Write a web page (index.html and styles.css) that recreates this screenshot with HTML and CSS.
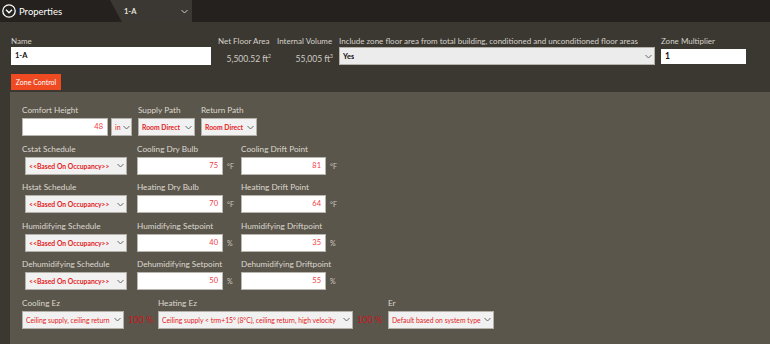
FILE: index.html
```html
<!DOCTYPE html>
<html lang="en">
<head>
    <meta charset="UTF-8">
    <title>Properties</title>
    <link rel="stylesheet" href="styles.css">
</head>
<body>
    <div class="topbar">
        <div class="title">
            <svg class="title-icon" width="14" height="14" viewBox="0 0 14 14">
                <circle cx="7" cy="7" r="6.2" fill="none" stroke="#fff" stroke-width="1.3"/>
                <polyline points="4,5.8 7,8.8 10,5.8" fill="none" stroke="#fff" stroke-width="1.4"/>
            </svg>
            <span>Properties</span>
        </div>
        <div class="tab">
            <span>1-A</span>
            <svg width="7" height="5" viewBox="0 0 7 5"><polyline points="0.5,1 3.5,4 6.5,1" fill="none" stroke="#cfcac2" stroke-width="1"/></svg>
        </div>
    </div>

    <div class="main">
        <div class="general">
            <div class="gfield name-field">
                <label>Name</label>
                <div class="text-box bold">1-A</div>
            </div>
            <div class="gfield area-field">
                <label>Net Floor Area</label>
                <div class="readout">5,500.52 ft<sup>2</sup></div>
            </div>
            <div class="gfield volume-field">
                <label>Internal Volume</label>
                <div class="readout">55,005 ft<sup>3</sup></div>
            </div>
            <div class="gfield include-field">
                <label>Include zone floor area from total building, conditioned and unconditioned floor areas</label>
                <div class="drop light">
                    <span class="bold">Yes</span>
                    <svg width="7" height="5" viewBox="0 0 7 5"><polyline points="0.5,1 3.5,4 6.5,1" fill="none" stroke="#666" stroke-width="1"/></svg>
                </div>
            </div>
            <div class="gfield mult-field">
                <label>Zone Multiplier</label>
                <div class="text-box bold small-box">1</div>
            </div>
        </div>

        <button class="zone-btn" type="button">Zone Control</button>

        <div class="panel">
            <div class="row">
                <div class="pfield comfort">
                    <label>Comfort Height</label>
                    <div class="ctl">
                        <div class="num w86">48</div>
                        <div class="drop unit-drop"><span>in</span><svg width="7" height="5" viewBox="0 0 7 5"><polyline points="0.5,1 3.5,4 6.5,1" fill="none" stroke="#666" stroke-width="1"/></svg></div>
                    </div>
                </div>
                <div class="pfield supply">
                    <label>Supply Path</label>
                    <div class="drop w57 bold"><span>Room Direct</span><svg width="7" height="5" viewBox="0 0 7 5"><polyline points="0.5,1 3.5,4 6.5,1" fill="none" stroke="#666" stroke-width="1"/></svg></div>
                </div>
                <div class="pfield">
                    <label>Return Path</label>
                    <div class="drop w56 bold"><span>Room Direct</span><svg width="7" height="5" viewBox="0 0 7 5"><polyline points="0.5,1 3.5,4 6.5,1" fill="none" stroke="#666" stroke-width="1"/></svg></div>
                </div>
            </div>

            <div class="row">
                <div class="pfield col1">
                    <label>Cstat Schedule</label>
                    <div class="drop sched bold"><span>&lt;&lt;Based On Occupancy&gt;&gt;</span><svg width="7" height="5" viewBox="0 0 7 5"><polyline points="0.5,1 3.5,4 6.5,1" fill="none" stroke="#666" stroke-width="1"/></svg></div>
                </div>
                <div class="pfield col2">
                    <label>Cooling Dry Bulb</label>
                    <div class="ctl"><div class="num w86">75</div><span class="unit">°F</span></div>
                </div>
                <div class="pfield">
                    <label>Cooling Drift Point</label>
                    <div class="ctl"><div class="num w85">81</div><span class="unit">°F</span></div>
                </div>
            </div>

            <div class="row">
                <div class="pfield col1">
                    <label>Hstat Schedule</label>
                    <div class="drop sched bold"><span>&lt;&lt;Based On Occupancy&gt;&gt;</span><svg width="7" height="5" viewBox="0 0 7 5"><polyline points="0.5,1 3.5,4 6.5,1" fill="none" stroke="#666" stroke-width="1"/></svg></div>
                </div>
                <div class="pfield col2">
                    <label>Heating Dry Bulb</label>
                    <div class="ctl"><div class="num w86">70</div><span class="unit">°F</span></div>
                </div>
                <div class="pfield">
                    <label>Heating Drift Point</label>
                    <div class="ctl"><div class="num w85">64</div><span class="unit">°F</span></div>
                </div>
            </div>

            <div class="row">
                <div class="pfield col1">
                    <label>Humidifying Schedule</label>
                    <div class="drop sched bold"><span>&lt;&lt;Based On Occupancy&gt;&gt;</span><svg width="7" height="5" viewBox="0 0 7 5"><polyline points="0.5,1 3.5,4 6.5,1" fill="none" stroke="#666" stroke-width="1"/></svg></div>
                </div>
                <div class="pfield col2">
                    <label>Humidifying Setpoint</label>
                    <div class="ctl"><div class="num w86">40</div><span class="unit">%</span></div>
                </div>
                <div class="pfield">
                    <label>Humidifying Driftpoint</label>
                    <div class="ctl"><div class="num w85">35</div><span class="unit">%</span></div>
                </div>
            </div>

            <div class="row">
                <div class="pfield col1">
                    <label>Dehumidifying Schedule</label>
                    <div class="drop sched bold"><span>&lt;&lt;Based On Occupancy&gt;&gt;</span><svg width="7" height="5" viewBox="0 0 7 5"><polyline points="0.5,1 3.5,4 6.5,1" fill="none" stroke="#666" stroke-width="1"/></svg></div>
                </div>
                <div class="pfield col2">
                    <label>Dehumidifying Setpoint</label>
                    <div class="ctl"><div class="num w86">50</div><span class="unit">%</span></div>
                </div>
                <div class="pfield">
                    <label>Dehumidifying Driftpoint</label>
                    <div class="ctl"><div class="num w85">55</div><span class="unit">%</span></div>
                </div>
            </div>

            <div class="row">
                <div class="pfield ez1">
                    <label>Cooling Ez</label>
                    <div class="ctl">
                        <div class="drop w102"><span>Ceiling supply, ceiling return</span><svg width="7" height="5" viewBox="0 0 7 5"><polyline points="0.5,1 3.5,4 6.5,1" fill="none" stroke="#666" stroke-width="1"/></svg></div>
                        <span class="pct">100 %</span>
                    </div>
                </div>
                <div class="pfield ez2">
                    <label>Heating Ez</label>
                    <div class="ctl">
                        <div class="drop w195"><span>Ceiling supply &lt; trm+15° (8°C), ceiling return, high velocity</span><svg width="7" height="5" viewBox="0 0 7 5"><polyline points="0.5,1 3.5,4 6.5,1" fill="none" stroke="#666" stroke-width="1"/></svg></div>
                        <span class="pct">100 %</span>
                    </div>
                </div>
                <div class="pfield">
                    <label>Er</label>
                    <div class="drop w106"><span>Default based on system type</span><svg width="7" height="5" viewBox="0 0 7 5"><polyline points="0.5,1 3.5,4 6.5,1" fill="none" stroke="#666" stroke-width="1"/></svg></div>
                </div>
            </div>
        </div>
    </div>
</body>
</html>
```

FILE: styles.css
```css
body {
    margin: 0;
    width: 770px;
    height: 344px;
    overflow: hidden;
    background-color: #3b3832;
    font-family: Lato, "Liberation Sans", sans-serif;
    color: #d6d2ca;
}
.topbar {
    height: 22px;
    background-color: #24211e;
    display: flex;
    align-items: center;
}
.title {
    width: 108px;
    padding-left: 2px;
    display: flex;
    align-items: center;
    gap: 3px;
    color: #fff;
    font-size: 9.5px;
}
.tab {
    width: 82px;
    height: 22px;
    box-sizing: border-box;
    padding: 0 4px 0 14px;
    background-color: #3b3833;
    clip-path: polygon(0 0, 100% 0, 100% 100%, 12px 100%);
    display: flex;
    align-items: center;
    justify-content: space-between;
    font-size: 7.5px;
    font-weight: bold;
    color: #e6e2da;
}
.main {
    display: flex;
    flex-direction: column;
    height: 322px;
}
.general {
    display: flex;
    gap: 6px;
    padding: 13px 0 0 11px;
}
.general label {
    display: block;
    height: 12px;
    line-height: 12px;
    font-size: 8px;
    white-space: nowrap;
}
.name-field {
    width: 200px;
    margin-right: 1px;
}
.area-field {
    width: 53px;
}
.volume-field {
    width: 56px;
}
.include-field {
    width: 316px;
}
.mult-field {
    width: 85px;
}
.text-box {
    height: 18px;
    box-sizing: border-box;
    background-color: #fff;
    color: #111;
    font-size: 7.5px;
    line-height: 18px;
    padding-left: 4px;
}
.small-box {
    height: 15px;
    margin-top: 2px;
    line-height: 15px;
    font-size: 8.5px;
}
.bold {
    font-weight: bold;
}
.readout {
    height: 18px;
    line-height: 18px;
    text-align: right;
    font-size: 8.5px;
    color: #cfcbc3;
    white-space: nowrap;
}
.readout sup {
    font-size: 5px;
    vertical-align: 4px;
}
.zone-btn {
    align-self: flex-start;
    margin: 9px 0 0 11px;
    width: 50px;
    height: 16px;
    padding: 0;
    border: none;
    background-color: #f04a23;
    color: #fff;
    font-family: inherit;
    font-size: 7px;
}
.panel {
    flex: 1;
    margin: 2px 0 0 10px;
    padding: 11px 0 0 12px;
    background-color: #5b564b;
}
.row {
    display: flex;
    margin-bottom: 5.6px;
}
.pfield label {
    display: block;
    height: 14px;
    line-height: 14px;
    margin-bottom: 1px;
    font-size: 8.2px;
    color: #dcd8d0;
    white-space: nowrap;
}
.ctl {
    display: flex;
    align-items: center;
}
.comfort {
    width: 116px;
}
.supply {
    width: 63px;
}
.col1 {
    width: 115px;
}
.col2 {
    width: 104px;
}
.ez1 {
    width: 136px;
}
.ez2 {
    width: 230px;
}
.num {
    height: 18px;
    box-sizing: border-box;
    background-color: #fff;
    border: 1px solid #b9b6b0;
    color: #ef3b44;
    font-size: 7.5px;
    line-height: 16px;
    text-align: right;
    padding-right: 4px;
}
.w86 { width: 86px; }
.w85 { width: 85px; }
.w57 { width: 57px; }
.w56 { width: 56px; }
.w102 { width: 102px; }
.w106 { width: 106px; }
.w195 { width: 195px; }
.unit {
    margin-left: 4px;
    font-size: 7px;
    color: #cdc9c1;
}
.pct {
    margin-left: 4px;
    font-size: 9px;
    color: #c8141c;
    white-space: nowrap;
}
.drop {
    height: 18px;
    box-sizing: border-box;
    background-color: #f1f1f1;
    border: 1px solid #b4b1ab;
    display: flex;
    align-items: center;
    justify-content: space-between;
    padding: 0 2px 0 3px;
    color: #e31b23;
    font-size: 6.8px;
    white-space: nowrap;
    overflow: hidden;
}
.drop span {
    overflow: hidden;
}
.drop svg {
    flex: none;
    margin-left: 2px;
}
.light {
    background-color: #ececec;
    color: #111;
    font-size: 7.5px;
}
.unit-drop {
    width: 21px;
    margin-left: 3px;
    padding: 0 1px 0 3px;
    font-size: 7px;
}
.unit-drop svg {
    margin-left: 1px;
}
.sched {
    width: 102px;
    margin-left: 3px;
}
```
